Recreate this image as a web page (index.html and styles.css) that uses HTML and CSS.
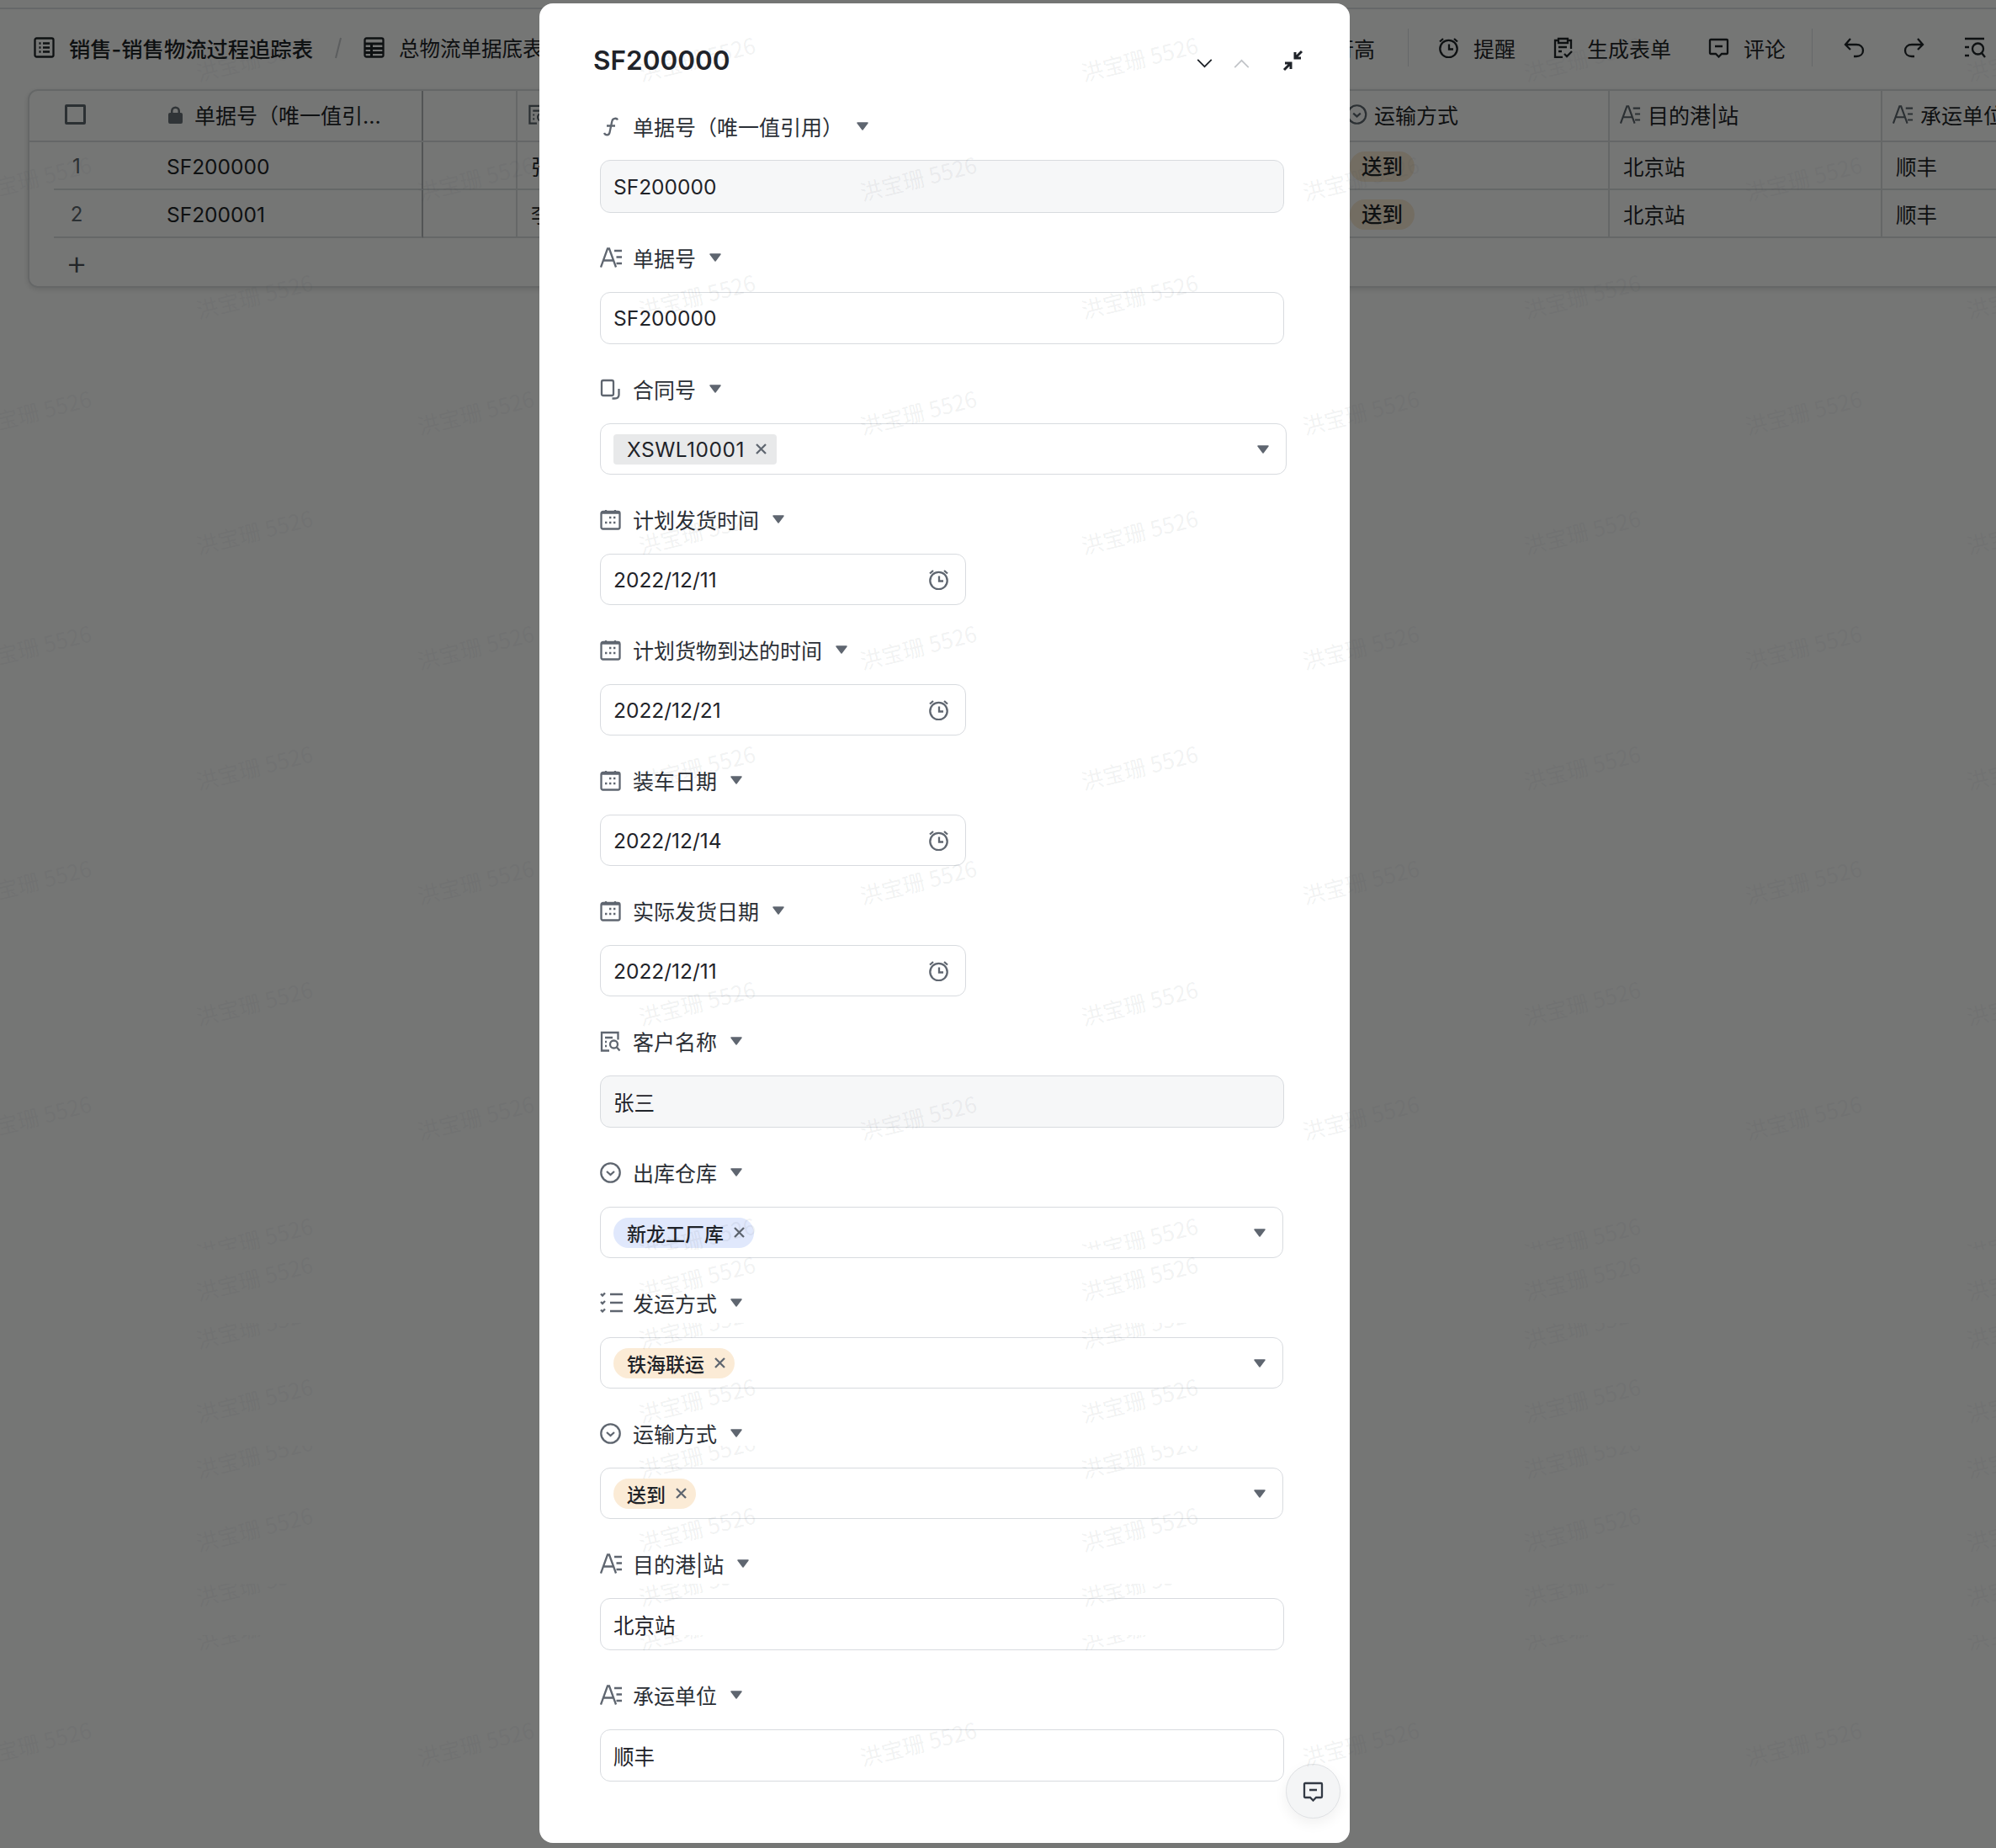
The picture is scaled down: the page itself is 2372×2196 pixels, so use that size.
FILE: index.html
```html
<!DOCTYPE html>
<html lang="zh-CN">
<head>
<meta charset="utf-8">
<title>销售物流过程追踪表</title>
<link rel="stylesheet" href="styles.css">
</head>
<body>
<svg class="defs" width="0" height="0" aria-hidden="true">
  <defs>
    <symbol id="i-text" viewBox="0 0 27 24"><path d="M1 23.500 9 1.500h2L19 23.500M4 15.500h12M17 4h9M19.500 11.500h6.500M19.500 19h6.500"/></symbol>
    <symbol id="i-fx" viewBox="0 0 25 25"><path d="M21 4.500c-1-2.500-6-2.500-6.700 1.500l-2.800 13.500c-.7 3.500-5 3.800-6.500.5M8 11.500h10"/></symbol>
    <symbol id="i-link" viewBox="0 0 25 25"><rect x="2" y="2" width="14" height="18" rx="2"/><path d="M22.500 12v7c0 3-2 4.500-5 4.500h-3"/></symbol>
    <symbol id="i-cal" viewBox="0 0 25 25"><rect x="1.500" y="3" width="22" height="20.500" rx="2"/><path d="M7 1v3.500M18 1v3.500M1.500 4.500h22"/><path class="dots" d="M11 10h2.400M16 10h2.400M6 16h2.400M11 16h2.400M16 16h2.400"/></symbol>
    <symbol id="i-alarm" viewBox="0 0 25 25"><circle cx="12.500" cy="14" r="10.200"/><path d="M13 8.500v6h5M2 5.500 6 2M23 5.500 19 2"/></symbol>
    <symbol id="i-circle" viewBox="0 0 25 25"><circle cx="12.500" cy="12.500" r="11.200"/><path d="M8 11l4.500 4 4.500-4"/></symbol>
    <symbol id="i-doc" viewBox="0 0 25 25"><path d="M21.500 10.500V2H2v21.500h9M6 8h9M6 13h2M6 18h2"/><circle cx="16.500" cy="16" r="4.500"/><path d="m20 19.500 3.500 4"/></symbol>
    <symbol id="i-list" viewBox="0 0 27 24"><path d="M12 2h15M12 12h15M12 22h15M1 1.500l2 2 3-3M1 11l2 2 3-3M1 20.500l2 2 3-3"/></symbol>
    <symbol id="i-comment" viewBox="0 0 25 25"><path d="M3 3h19a1 1 0 0 1 1 1v15a1 1 0 0 1-1 1h-6l-3.500 3.500L9 20H3a1 1 0 0 1-1-1V4a1 1 0 0 1 1-1zM8 11h9"/></symbol>
    <symbol id="i-sheet" viewBox="0 0 25 25"><rect x="1.500" y="1.500" width="22" height="22" rx="2"/><path class="dots" d="M6.500 7.500h2M11 7.500h8M6.500 12.500h2M11 12.500h8M6.500 17.500h2M11 17.500h8"/></symbol>
    <symbol id="i-grid" viewBox="0 0 25 25"><rect x="1.500" y="1.500" width="22" height="22" rx="2"/><path class="thick" d="M1 8h23M1 13.500h23M1 18.500h23M9.500 8v15"/></symbol>
    <symbol id="i-clip" viewBox="0 0 25 25"><path d="M7 4H3v20h9M18 4h4v10M7 2h11v5H7zM7 12h10M7 17h4M14 20l3 3 6-6"/></symbol>
    <symbol id="i-undo" viewBox="0 0 25 25"><path d="M8 2 2 9l6 6M2 9h13c5 0 8 3 8 7s-3 7-8 7h-3"/></symbol>
    <symbol id="i-redo" viewBox="0 0 25 25"><path d="m17 2 6 7-6 6M23 9H10c-5 0-8 3-8 7s3 7 8 7h3"/></symbol>
    <symbol id="i-find" viewBox="0 0 27 25"><path d="M2 2h23M2 12h5M2 22h5"/><circle cx="17.500" cy="14" r="6.500"/><path d="m22 19 4 5"/></symbol>
    <symbol id="i-x" viewBox="0 0 13 13"><path d="m1 1 11 11M12 1 1 12"/></symbol>
    <symbol id="i-caret" viewBox="0 0 14 10"><path class="solid-line" d="M1 1h12L7 9z"/></symbol>
    <symbol id="i-lock" viewBox="0 0 17 21"><path class="solid" d="M2 8h1V6a5.500 5.500 0 0 1 11 0v2h1a2 2 0 0 1 2 2v9a2 2 0 0 1-2 2H2a2 2 0 0 1-2-2v-9a2 2 0 0 1 2-2zm3.500 0h6V6a3 3 0 0 0-6 0z"/></symbol>
  </defs>
</svg>

<div class="page">
  <div class="strip"></div>
  <header class="toolbar">
    <div class="crumbs">
      <svg class="ticon"><use href="#i-sheet"/></svg>
      <span class="crumb crumb--main">销售-销售物流过程追踪表</span>
      <svg class="slash" width="8" height="26" viewBox="0 0 8 26"><path d="M7 1 1 25"/></svg>
      <svg class="ticon"><use href="#i-grid"/></svg>
      <span class="crumb">总物流单据底表</span>
    </div>
    <div class="tools">
      <span class="tool-text">行高</span>
      <i class="divider divider--a"></i>
      <span class="tool"><svg class="ticon"><use href="#i-alarm"/></svg><span class="tool-text">提醒</span></span>
      <span class="tool"><svg class="ticon"><use href="#i-clip"/></svg><span class="tool-text">生成表单</span></span>
      <span class="tool"><svg class="ticon"><use href="#i-comment"/></svg><span class="tool-text">评论</span></span>
      <i class="divider divider--b"></i>
      <span class="hist">
        <svg class="ticon"><use href="#i-undo"/></svg>
        <svg class="ticon"><use href="#i-redo"/></svg>
        <svg class="ticon ticon--wide"><use href="#i-find"/></svg>
      </span>
    </div>
  </header>

  <section class="table">
    <div class="row row--head">
      <div class="cell cell--frozen">
        <span class="checkbox"></span>
        <svg class="lock"><use href="#i-lock"/></svg>
        <span class="head-text">单据号（唯一值引...</span>
      </div>
      <div class="cell"></div>
      <div class="cell cell--pad"><svg class="hicon"><use href="#i-doc"/></svg><span class="head-text">客户名称</span></div>
      <div class="cell cell--pad"><svg class="hicon hicon--circle"><use href="#i-circle"/></svg><span class="head-text">运输方式</span></div>
      <div class="cell cell--pad"><svg class="hicon"><use href="#i-text"/></svg><span class="head-text">目的港|站</span></div>
      <div class="cell cell--pad"><svg class="hicon"><use href="#i-text"/></svg><span class="head-text">承运单位</span></div>
    </div>
    <div class="row">
      <div class="cell cell--frozen cell--data"><span class="num">1</span><span class="code">SF200000</span></div>
      <div class="cell"></div>
      <div class="cell cell--text">张三</div>
      <div class="cell cell--text"><span class="pill">送到</span></div>
      <div class="cell cell--text">北京站</div>
      <div class="cell cell--text">顺丰</div>
    </div>
    <div class="row">
      <div class="cell cell--frozen cell--data"><span class="num">2</span><span class="code">SF200001</span></div>
      <div class="cell"></div>
      <div class="cell cell--text">李四</div>
      <div class="cell cell--text"><span class="pill">送到</span></div>
      <div class="cell cell--text">北京站</div>
      <div class="cell cell--text">顺丰</div>
    </div>
    <div class="addrow"><span class="plus">+</span></div>
  </section>
</div>

<div class="mask"></div>

<aside class="modal">
  <div class="modal-head">
    <h1 class="modal-title">SF200000</h1>
    <div class="modal-nav">
      <svg class="chev" viewBox="0 0 20 12"><path d="m1 1 9 9 9-9"/></svg>
      <svg class="chev chev--off" viewBox="0 0 20 12"><path d="m1 11 9-9 9 9"/></svg>
      <svg class="shrink" viewBox="0 0 25 26"><path d="M23 2 15 10M15 3v7h7M2 24l8-8M3 16h7v7"/></svg>
    </div>
  </div>

  <div class="fields">
    <div class="field field--first">
      <div class="label"><svg class="ficon"><use href="#i-fx"/></svg><span>单据号（唯一值引用）</span><svg class="caret"><use href="#i-caret"/></svg></div>
      <div class="input input--readonly input--tall">SF200000</div>
    </div>
    <div class="field">
      <div class="label"><svg class="ficon ficon--wide"><use href="#i-text"/></svg><span>单据号</span><svg class="caret"><use href="#i-caret"/></svg></div>
      <div class="input">SF200000</div>
    </div>
    <div class="field">
      <div class="label"><svg class="ficon"><use href="#i-link"/></svg><span>合同号</span><svg class="caret"><use href="#i-caret"/></svg></div>
      <div class="input input--select input--contract"><span class="tag tag--grey">XSWL10001<svg class="x"><use href="#i-x"/></svg></span><svg class="caret caret--end"><use href="#i-caret"/></svg></div>
    </div>
    <div class="field">
      <div class="label"><svg class="ficon"><use href="#i-cal"/></svg><span>计划发货时间</span><svg class="caret"><use href="#i-caret"/></svg></div>
      <div class="input input--date">2022/12/11<svg class="alarm"><use href="#i-alarm"/></svg></div>
    </div>
    <div class="field">
      <div class="label"><svg class="ficon"><use href="#i-cal"/></svg><span>计划货物到达的时间</span><svg class="caret"><use href="#i-caret"/></svg></div>
      <div class="input input--date">2022/12/21<svg class="alarm"><use href="#i-alarm"/></svg></div>
    </div>
    <div class="field">
      <div class="label"><svg class="ficon"><use href="#i-cal"/></svg><span>装车日期</span><svg class="caret"><use href="#i-caret"/></svg></div>
      <div class="input input--date">2022/12/14<svg class="alarm"><use href="#i-alarm"/></svg></div>
    </div>
    <div class="field">
      <div class="label"><svg class="ficon"><use href="#i-cal"/></svg><span>实际发货日期</span><svg class="caret"><use href="#i-caret"/></svg></div>
      <div class="input input--date">2022/12/11<svg class="alarm"><use href="#i-alarm"/></svg></div>
    </div>
    <div class="field">
      <div class="label"><svg class="ficon"><use href="#i-doc"/></svg><span>客户名称</span><svg class="caret"><use href="#i-caret"/></svg></div>
      <div class="input input--readonly">张三</div>
    </div>
    <div class="field">
      <div class="label"><svg class="ficon"><use href="#i-circle"/></svg><span>出库仓库</span><svg class="caret"><use href="#i-caret"/></svg></div>
      <div class="input input--select"><span class="tag tag--blue">新龙工厂库<svg class="x"><use href="#i-x"/></svg></span><svg class="caret caret--end"><use href="#i-caret"/></svg></div>
    </div>
    <div class="field">
      <div class="label"><svg class="ficon ficon--wide"><use href="#i-list"/></svg><span>发运方式</span><svg class="caret"><use href="#i-caret"/></svg></div>
      <div class="input input--select"><span class="tag tag--orange">铁海联运<svg class="x"><use href="#i-x"/></svg></span><svg class="caret caret--end"><use href="#i-caret"/></svg></div>
    </div>
    <div class="field">
      <div class="label"><svg class="ficon"><use href="#i-circle"/></svg><span>运输方式</span><svg class="caret"><use href="#i-caret"/></svg></div>
      <div class="input input--select"><span class="tag tag--orange">送到<svg class="x"><use href="#i-x"/></svg></span><svg class="caret caret--end"><use href="#i-caret"/></svg></div>
    </div>
    <div class="field">
      <div class="label"><svg class="ficon ficon--wide"><use href="#i-text"/></svg><span>目的港|站</span><svg class="caret"><use href="#i-caret"/></svg></div>
      <div class="input">北京站</div>
    </div>
    <div class="field">
      <div class="label"><svg class="ficon ficon--wide"><use href="#i-text"/></svg><span>承运单位</span><svg class="caret"><use href="#i-caret"/></svg></div>
      <div class="input">顺丰</div>
    </div>
  </div>

  <button class="float-btn" type="button" aria-label="评论"><svg class="float-icon"><use href="#i-comment"/></svg></button>
</aside>

<svg class="watermark" width="2372" height="2196" aria-hidden="true">
  <defs>
    <clipPath id="c1"><rect x="-120" y="1400" width="240" height="85"/></clipPath>
    <clipPath id="c2"><rect x="-120" y="1572" width="240" height="60"/></clipPath>
    <clipPath id="c3"><rect x="-120" y="1718" width="240" height="60"/></clipPath>
    <clipPath id="c4"><rect x="-120" y="1882" width="240" height="60"/></clipPath>
    <clipPath id="c5"><rect x="-120" y="1943" width="240" height="40"/></clipPath>
    <g id="col-a">
      <text transform="translate(0 73) rotate(-14)">洪宝珊 5526</text>
      <text transform="translate(0 355) rotate(-14)">洪宝珊 5526</text>
      <text transform="translate(0 635) rotate(-14)">洪宝珊 5526</text>
      <text transform="translate(0 915) rotate(-14)">洪宝珊 5526</text>
      <text transform="translate(0 1195) rotate(-14)">洪宝珊 5526</text>
      <g clip-path="url(#c1)"><text transform="translate(0 1476) rotate(-14)">洪宝珊 5526</text></g>
      <text transform="translate(0 1522) rotate(-14)">洪宝珊 5526</text>
      <g clip-path="url(#c2)"><text transform="translate(0 1579) rotate(-14)">洪宝珊 5526</text></g>
      <text transform="translate(0 1667) rotate(-14)">洪宝珊 5526</text>
      <g clip-path="url(#c3)"><text transform="translate(0 1733) rotate(-14)">洪宝珊 5526</text></g>
      <text transform="translate(0 1820) rotate(-14)">洪宝珊 5526</text>
      <g clip-path="url(#c4)"><text transform="translate(0 1885) rotate(-14)">洪宝珊 5526</text></g>
      <g clip-path="url(#c5)"><text transform="translate(0 1937) rotate(-14)">洪宝珊 5526</text></g>
    </g>
    <g id="col-b">
      <text transform="translate(0 215) rotate(-14)">洪宝珊 5526</text>
      <text transform="translate(0 493) rotate(-14)">洪宝珊 5526</text>
      <text transform="translate(0 772) rotate(-14)">洪宝珊 5526</text>
      <text transform="translate(0 1051) rotate(-14)">洪宝珊 5526</text>
      <text transform="translate(0 1331) rotate(-14)">洪宝珊 5526</text>
      <text transform="translate(0 2075) rotate(-14)">洪宝珊 5526</text>
    </g>
  </defs>
  <use href="#col-a" x="303"/>
  <use href="#col-a" x="829"/>
  <use href="#col-a" x="1355"/>
  <use href="#col-a" x="1881"/>
  <use href="#col-a" x="2407"/>
  <use href="#col-b" x="40"/>
  <use href="#col-b" x="566"/>
  <use href="#col-b" x="1092"/>
  <use href="#col-b" x="1618"/>
  <use href="#col-b" x="2144"/>
</svg>
</body>
</html>
```
FILE: styles.css
```css
* { box-sizing: border-box; }

html, body {
  margin: 0;
  height: 2196px;
  overflow: hidden;
  background: #fff;
}

body {
  position: relative;
  font-family: Inter, "Noto Sans CJK SC", sans-serif;
  color: #1f2329;
}

.defs { position: absolute; }

symbol { fill: none; stroke: currentColor; stroke-width: 2.300; }
.dots { stroke-width: 2.600; }
.thick { stroke-width: 3; }
.solid { fill: currentColor; stroke: none; }
.solid-line { fill: currentColor; stroke: currentColor; stroke-width: 1.500; stroke-linejoin: round; }

svg { display: block; flex: none; overflow: visible; }

/* ------- page behind the mask ------- */
.page { display: flex; flex-direction: column; height: 100%; overflow: hidden; }

.strip { height: 11px; border-bottom: 2px solid #dfe1e4; background: #fdfdfd; }

.toolbar {
  height: 95px;
  padding: 0 12px 4px 40px;
  display: flex;
  align-items: center;
  justify-content: space-between;
  flex: none;
}

.crumbs { display: flex; align-items: center; }

.ticon { width: 25px; height: 25px; color: #1f2329; }
.ticon--wide { width: 27px; }

.crumb { font-size: 24.500px; margin-left: 17px; white-space: nowrap; }
.crumb--main { font-size: 25.300px; font-weight: 500; margin-right: 26px; }
.slash { margin-right: 26px; fill: none; stroke: #c8cbcf; stroke-width: 2; }

.tools { display: flex; align-items: center; }
.tool { display: flex; align-items: center; gap: 17px; margin-right: 44px; }
.tool:nth-of-type(3) { gap: 16px; }
.tool:nth-of-type(4) { margin-right: 0; }
.tool-text { font-size: 25px; white-space: nowrap; }

.divider { display: block; width: 1px; height: 45px; background: #dfe1e4; }
.divider--a { margin: 0 35px 0 39px; }
.divider--b { margin: 0 37px 0 31px; }

.hist { display: flex; align-items: center; gap: 46px; }

/* table */
.table {
  width: 2420px;
  flex: none;
  height: 236px;
  margin-left: 33px;
  border: 2px solid #dcdee1;
  border-radius: 12px;
  box-shadow: 0 2px 6px rgba(0, 0, 0, .12);
  overflow: hidden;
}

.row {
  display: grid;
  grid-template-columns: 468px 112px 973px 325px 324px 324px;
  height: 57px;
  font-size: 24.500px;
}

.row--head { height: 61px; border-bottom: 2px solid #dcdee1; }

.cell {
  display: flex;
  align-items: center;
  border-right: 2px solid #dcdee1;
  border-bottom: 2px solid #dcdee1;
  white-space: nowrap;
  overflow: hidden;
  padding-top: 2px;
}

.row--head .cell { border-bottom: 0; padding-top: 0; padding-bottom: 3px; }
.cell--frozen { border-right-color: #b5b8bc; }
.cell--data { margin-left: 29px; }
.cell--pad { padding-left: 12px; gap: 8px; }
.cell--text { padding-left: 16px; }

.checkbox { width: 25px; height: 24px; margin-left: 42px; border: 3px solid #5f6670; border-radius: 2px; }
.lock { width: 17px; height: 21px; margin: 0 14px 0 98px; color: #6a7078; }
.head-text { font-size: 25px; }

.hicon { width: 25px; height: 24px; color: #5f6670; }

.num { width: 54px; text-align: center; color: #5f6670; font-size: 24px; }
.code { margin-left: 80px; font-size: 24.500px; }

.pill {
  height: 36px;
  padding: 0 14px;
  border-radius: 18px;
  background: #fbebd6;
  font-weight: 500;
  line-height: 36px;
}

.addrow { height: 58px; display: flex; align-items: center; }
.plus { width: 112px; text-align: center; font-size: 40px; font-weight: 300; line-height: 1; color: #4a4f57; }

/* ------- mask ------- */
.mask { position: absolute; inset: 0; background: rgba(0, 2, 0, .54); }

/* ------- modal ------- */
.modal {
  position: absolute;
  left: 641px;
  top: 4px;
  width: 963px;
  height: 2186px;
  background: #fff;
  border-radius: 16px;
  overflow: hidden;
}

.modal-head {
  height: 129px;
  padding: 48px 0 0 64px;
  display: flex;
  align-items: flex-start;
  justify-content: space-between;
}

.modal-title { margin: 0; font-size: 31.500px; font-weight: 600; line-height: 40px; color: #1f2329; }

.modal-nav { display: flex; align-items: center; margin-right: 55px; height: 46px; }
.chev { width: 19px; height: 11px; margin-right: 25px; fill: none; stroke: #1f2329; stroke-width: 2; }
.chev--off { stroke: #c2c5c9; margin-right: 39px; }
.shrink { width: 25px; height: 26px; margin-top: -6px; fill: none; stroke: #1f2329; stroke-width: 3; }

.fields { display: flex; flex-direction: column; gap: 36px; padding-left: 72px; }

.field { display: flex; flex-direction: column; gap: 24px; }
.field--first { gap: 23px; }

.label {
  height: 34px;
  display: flex;
  align-items: center;
  font-size: 25px;
  color: #2b2f36;
}

.ficon { width: 25px; height: 25px; margin-right: 14px; color: #5f6670; }
.ficon--wide { width: 27px; height: 24px; margin-right: 12px; }

.caret { width: 14px; height: 10px; margin-left: 16px; color: #5f6670; }
.caret--end { margin-left: auto; margin-right: 20px; }

.input {
  width: 813px;
  height: 62px;
  display: flex;
  align-items: center;
  padding-left: 15px;
  border: 1px solid #d8dbdf;
  border-radius: 12px;
  font-size: 24.500px;
  color: #1f2329;
}

.input--tall { height: 63px; }
.input--readonly { background: #f6f7f8; }
.input--date { width: 435px; height: 61px; justify-content: space-between; padding-right: 19px; }
.input--select { width: 812px; height: 61px; }
.input--contract { width: 816px; }

.alarm { width: 25px; height: 25px; color: #5f6670; }

.tag {
  height: 36px;
  display: flex;
  align-items: center;
  gap: 12px;
  padding: 0 11px 0 16px;
  border-radius: 18px;
  font-size: 23px;
  font-weight: 500;
}

.tag--grey {
  border-radius: 4px;
  background: #e8e9ea;
  font-size: 24.500px;
  font-weight: 400;
  letter-spacing: .5px;
  padding-right: 12px;
  gap: 13px;
}
.tag--blue { background: #e0e8fc; }
.tag--orange { background: #fbebd6; }

.x { width: 13px; height: 13px; color: #5f6670; }

.float-btn {
  position: absolute;
  left: 887px;
  top: 2092px;
  width: 65px;
  height: 65px;
  padding: 0;
  display: flex;
  align-items: center;
  justify-content: center;
  border: 1px solid #dfe1e4;
  border-radius: 50%;
  background: #f4f5f6;
  box-shadow: 0 6px 16px rgba(0, 0, 0, .06);
}

.float-icon { width: 25px; height: 25px; color: #333a45; }

/* ------- watermark ------- */
.watermark {
  position: absolute;
  left: 0;
  top: 0;
  pointer-events: none;
}

.watermark text {
  font-family: "Noto Sans CJK SC", sans-serif;
  font-size: 26px;
  text-anchor: middle;
  dominant-baseline: middle;
  fill: rgba(55, 65, 75, .08);
}
```
